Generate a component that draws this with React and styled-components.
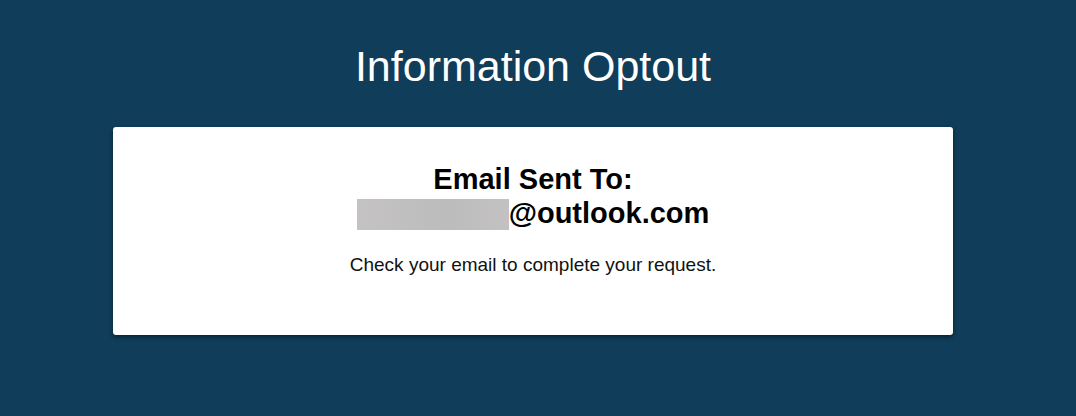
import React from "react";
import styled, { createGlobalStyle } from "styled-components";

const GlobalStyle = createGlobalStyle`
  html, body {
    margin: 0;
    padding: 0;
    background-color: #0f3d5a;
    font-family: "Liberation Sans", Arial, sans-serif;
  }
`;

const App = () => {
  return (
    <>
      <GlobalStyle />
      <Page>
        <Title>Information Optout</Title>
        <Card>
          <Heading>
            Email Sent To:
            <br />
            <Redacted />
            @outlook.com
          </Heading>
          <Message>Check your email to complete your request.</Message>
        </Card>
      </Page>
    </>
  );
};

export default App;

const Page = styled.div`
  min-height: 416px;
  display: flex;
  flex-direction: column;
  align-items: center;
  padding: 42px 10px 0 0;
  box-sizing: border-box;
  background-color: #0f3d5a;
`;

const Title = styled.h1`
  margin: 0 0 37px;
  color: #ffffff;
  font-size: 43px;
  font-weight: 400;
  line-height: 48px;
`;

const Card = styled.div`
  width: 840px;
  height: 208px;
  box-sizing: border-box;
  background-color: #ffffff;
  border-radius: 3px;
  box-shadow: 0 2px 4px rgba(0, 0, 0, 0.45);
  padding-top: 35px;
  text-align: center;
`;

const Heading = styled.h2`
  margin: 0 0 24px;
  color: #000000;
  font-size: 29px;
  font-weight: 700;
  line-height: 34px;
`;

const Redacted = styled.span`
  display: inline-block;
  width: 152px;
  height: 31px;
  vertical-align: -7px;
  background: linear-gradient(90deg, #c4c2c2, #bdbcbc 60%, #c3c1c1);
`;

const Message = styled.p`
  margin: 0;
  color: #111111;
  font-size: 19px;
  line-height: 22px;
`;
